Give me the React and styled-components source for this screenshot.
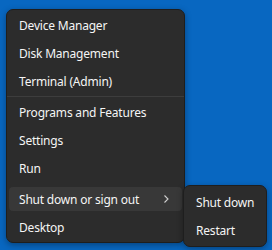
import React from "react";
import styled, { createGlobalStyle } from "styled-components";

const Global = createGlobalStyle`
  html, body { margin: 0; padding: 0; }
  body {
    width: 272px;
    height: 250px;
    overflow: hidden;
    background: #0867c1;
    font-family: "Noto Sans", "Open Sans", sans-serif;
  }
`;

const Desk = styled.div`
  position: relative;
  width: 272px;
  height: 250px;
  background: #0867c1;
`;

const Menu = styled.div`
  position: absolute;
  left: ${(p) => p.$x}px;
  top: ${(p) => p.$y}px;
  width: ${(p) => p.$w}px;
  box-sizing: border-box;
  padding: ${(p) => p.$pad}px 2px;
  background: #2c2c2c;
  border: 1px solid #1e1e1e;
  border-radius: 7px;
  box-shadow: 0 2px 6px rgba(0, 0, 0, 0.35);
  display: flex;
  flex-direction: column;
`;

const Item = styled.div`
  height: ${(p) => (p.$active ? 24 : 28)}px;
  margin: ${(p) => (p.$active ? "2px 0" : "0")};
  display: flex;
  align-items: center;
  justify-content: space-between;
  padding: 0 9px 0 10px;
  border-radius: 4px;
  color: #f5f5f5;
  font-size: 12px;
  letter-spacing: -0.2px;
  white-space: nowrap;
  background: ${(p) => (p.$active ? "#383838" : "transparent")};
`;

const Separator = styled.div`
  height: 1px;
  margin: 1px -2px 1px;
  background: ${(p) => (p.$hidden ? "transparent" : "#3d3d3d")};
`;

const Chevron = styled.span`
  display: flex;
  align-items: center;
  margin-right: 3px;
`;

export default function App() {
  return (
    <>
      <Global />
      <Desk>
        <Menu $x={6} $y={9} $w={179} $pad={1}>
          <Item>Device Manager</Item>
          <Item>Disk Management</Item>
          <Item>Terminal (Admin)</Item>
          <Separator />
          <Item>Programs and Features</Item>
          <Item>Settings</Item>
          <Item>Run</Item>
          <Separator $hidden />
          <Item $active>
            <span>Shut down or sign out</span>
            <Chevron>
              <svg width="8" height="10" viewBox="0 0 8 10">
                <path d="M2.5 1.5 L6 5 L2.5 8.5" fill="none" stroke="#d0d0d0" strokeWidth="1.1" />
              </svg>
            </Chevron>
          </Item>
          <Item>Desktop</Item>
        </Menu>
        <Menu $x={183} $y={185} $w={84} $pad={2}>
          <Item>Shut down</Item>
          <Item>Restart</Item>
        </Menu>
      </Desk>
    </>
  );
}
